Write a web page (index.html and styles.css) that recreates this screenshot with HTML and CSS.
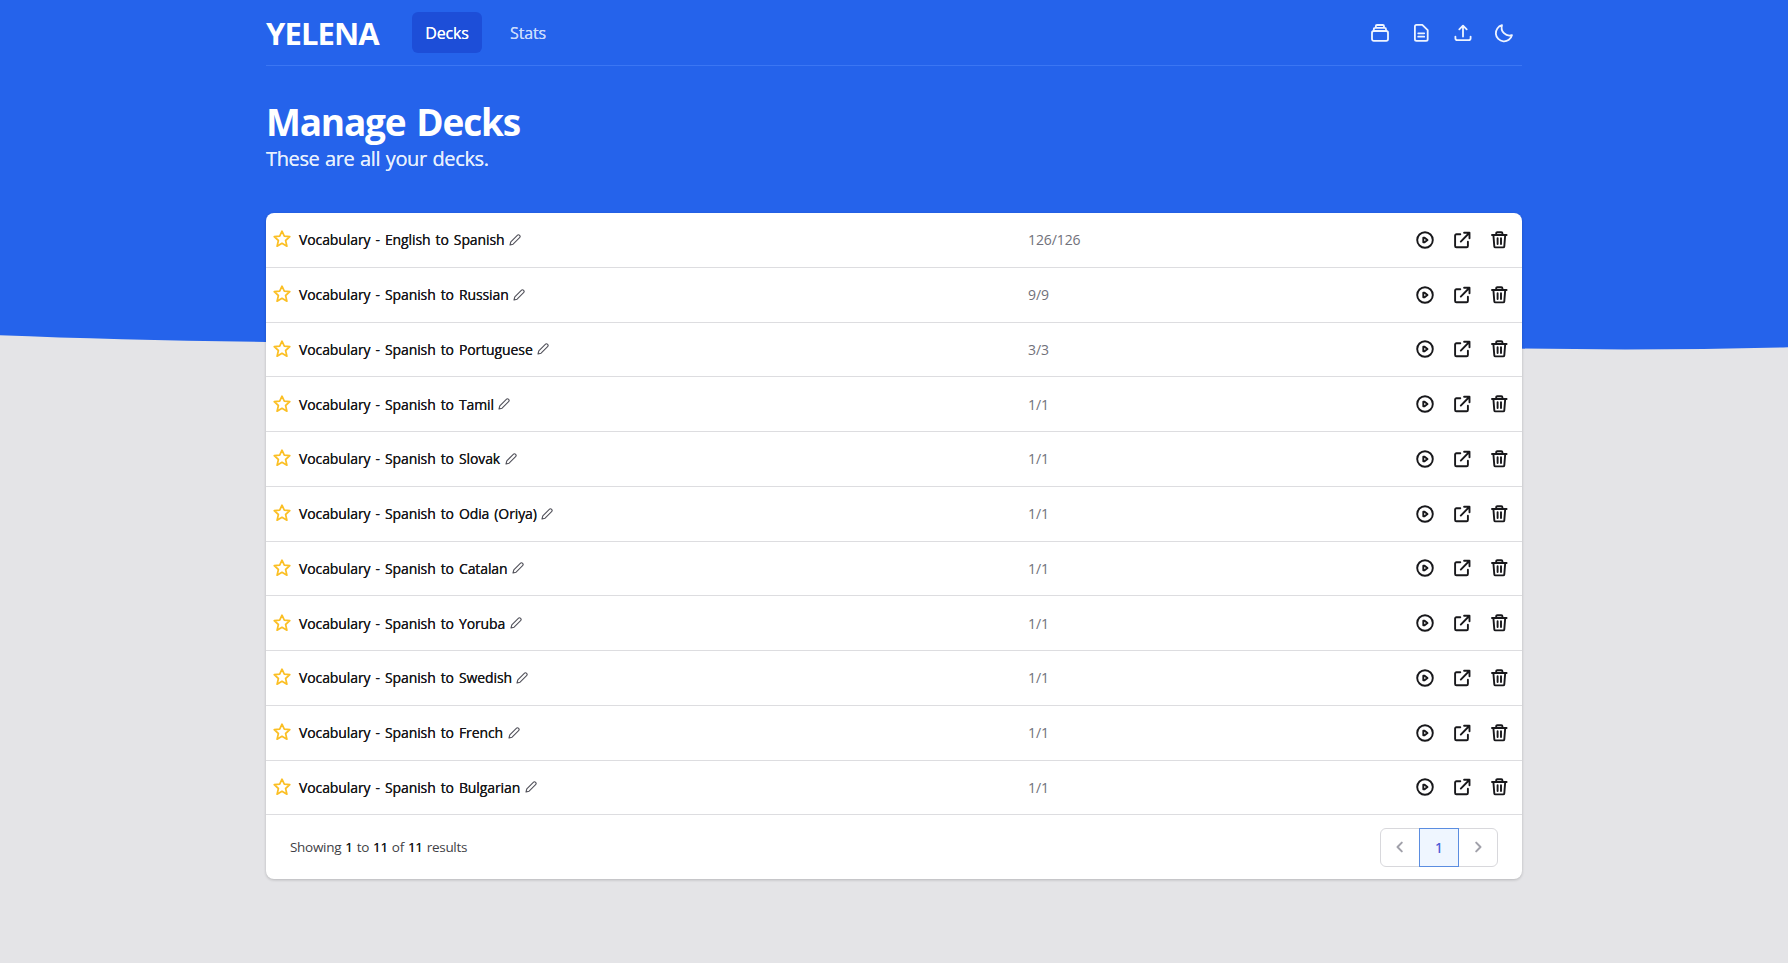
FILE: index.html
```html
<!DOCTYPE html>
<html lang="en">
<head>
<meta charset="utf-8">
<title>Yelena</title>
<link rel="stylesheet" href="styles.css">
</head>
<body>
<svg class="symbols" xmlns="http://www.w3.org/2000/svg">
  <symbol id="star" viewBox="0 0 18 18"><path d="M9 1.2l2.3 5 5.5.5-4.2 3.8 1.3 5.7L9 13.3l-4.9 2.9 1.3-5.7L1.2 6.7l5.5-.5z"/></symbol>
  <symbol id="pencil" viewBox="0 0 12 12"><path d="M1 11l.8-3.2L8.3 1.3a1.6 1.6 0 0 1 2.3 2.3L4.1 10.2z"/></symbol>
  <symbol id="play" viewBox="0 0 18 18"><circle cx="9" cy="9" r="7.8"/><path d="M7.3 6.7v4.6h1.3l2.9-2.3-2.9-2.3z"/></symbol>
  <symbol id="open" viewBox="0 0 18 18"><path d="M7.3 3.3H3.4a1.3 1.3 0 0 0-1.3 1.3V15a1.3 1.3 0 0 0 1.3 1.3h10.2a1.3 1.3 0 0 0 1.3-1.3v-4.2M7.8 10.6l8.4-8.6M11.1 1.8h5.4v5.4"/></symbol>
  <symbol id="trash" viewBox="0 0 18 18"><path d="M2 4h14.6M6.2 4V2.3A1.1 1.1 0 0 1 7.3 1.2h4a1.1 1.1 0 0 1 1.1 1.1V4M3.4 4l.9 11.3a1.2 1.2 0 0 0 1.2 1.1h7.6a1.2 1.2 0 0 0 1.2-1.1L15.2 4M7.6 7.2v5.8M11 7.2v5.8"/></symbol>
</svg>
<svg class="wave" viewBox="0 0 1788 350" preserveAspectRatio="none"><path d="M0 0H1788V347.2Q1650 351 1500 348.2C1180 340 600 346 266 342Q120 340 0 335.2Z"/></svg>
<div class="page">
  <header class="nav">
    <div class="brand">YELENA</div>
    <nav class="links"><a class="link active"><span>Decks</span></a><a class="link"><span>Stats</span></a></nav>
    <div class="tools">
      <svg viewBox="0 0 20 20"><rect x="2" y="8" width="16" height="9.8" rx="1.8"/><path d="M3.8 7.6V6.2q0-1.4 1.4-1.4h9.4q1.4 0 1.4 1.4v1.4M5.8 4.6V3.2q0-1.2 1.2-1.2h5.8q1.2 0 1.2 1.2v1.4"/></svg>
      <svg viewBox="0 0 20 20"><path d="M3.9 3.4A1.6 1.6 0 0 1 5.5 1.8h5.8l5.4 5.4v9a1.6 1.6 0 0 1-1.6 1.6H5.5a1.6 1.6 0 0 1-1.6-1.6zM7.2 10.3h6M7.2 13.7h6"/></svg>
      <svg viewBox="0 0 20 20"><path d="M10 13.5V2.8M6.3 6.3L10 2.6l3.7 3.7M2.4 13.6v1.7a1.9 1.9 0 0 0 1.9 1.9h11.4a1.9 1.9 0 0 0 1.9-1.9v-1.7"/></svg>
      <svg viewBox="0 0 20 20"><path d="M8 2.2a8.2 8.2 0 1 0 10 9.9A7.9 7.9 0 0 1 8 2.2z"/></svg>
    </div>
  </header>
  <div class="heading">
    <h1><span>Manage Decks</span></h1>
    <p><span>These are all your decks.</span></p>
  </div>
  <main class="card">
    <div class="row"><svg class="star"><use href="#star"/></svg><div class="name"><span>Vocabulary - English to Spanish</span><svg class="pencil"><use href="#pencil"/></svg></div><div class="count">126/126</div><div class="actions"><svg><use href="#play"/></svg><svg><use href="#open"/></svg><svg><use href="#trash"/></svg></div></div>
    <div class="row"><svg class="star"><use href="#star"/></svg><div class="name"><span>Vocabulary - Spanish to Russian</span><svg class="pencil"><use href="#pencil"/></svg></div><div class="count">9/9</div><div class="actions"><svg><use href="#play"/></svg><svg><use href="#open"/></svg><svg><use href="#trash"/></svg></div></div>
    <div class="row"><svg class="star"><use href="#star"/></svg><div class="name"><span>Vocabulary - Spanish to Portuguese</span><svg class="pencil"><use href="#pencil"/></svg></div><div class="count">3/3</div><div class="actions"><svg><use href="#play"/></svg><svg><use href="#open"/></svg><svg><use href="#trash"/></svg></div></div>
    <div class="row"><svg class="star"><use href="#star"/></svg><div class="name"><span>Vocabulary - Spanish to Tamil</span><svg class="pencil"><use href="#pencil"/></svg></div><div class="count">1/1</div><div class="actions"><svg><use href="#play"/></svg><svg><use href="#open"/></svg><svg><use href="#trash"/></svg></div></div>
    <div class="row"><svg class="star"><use href="#star"/></svg><div class="name"><span>Vocabulary - Spanish to Slovak</span><svg class="pencil"><use href="#pencil"/></svg></div><div class="count">1/1</div><div class="actions"><svg><use href="#play"/></svg><svg><use href="#open"/></svg><svg><use href="#trash"/></svg></div></div>
    <div class="row"><svg class="star"><use href="#star"/></svg><div class="name"><span>Vocabulary - Spanish to Odia (Oriya)</span><svg class="pencil"><use href="#pencil"/></svg></div><div class="count">1/1</div><div class="actions"><svg><use href="#play"/></svg><svg><use href="#open"/></svg><svg><use href="#trash"/></svg></div></div>
    <div class="row"><svg class="star"><use href="#star"/></svg><div class="name"><span>Vocabulary - Spanish to Catalan</span><svg class="pencil"><use href="#pencil"/></svg></div><div class="count">1/1</div><div class="actions"><svg><use href="#play"/></svg><svg><use href="#open"/></svg><svg><use href="#trash"/></svg></div></div>
    <div class="row"><svg class="star"><use href="#star"/></svg><div class="name"><span>Vocabulary - Spanish to Yoruba</span><svg class="pencil"><use href="#pencil"/></svg></div><div class="count">1/1</div><div class="actions"><svg><use href="#play"/></svg><svg><use href="#open"/></svg><svg><use href="#trash"/></svg></div></div>
    <div class="row"><svg class="star"><use href="#star"/></svg><div class="name"><span>Vocabulary - Spanish to Swedish</span><svg class="pencil"><use href="#pencil"/></svg></div><div class="count">1/1</div><div class="actions"><svg><use href="#play"/></svg><svg><use href="#open"/></svg><svg><use href="#trash"/></svg></div></div>
    <div class="row"><svg class="star"><use href="#star"/></svg><div class="name"><span>Vocabulary - Spanish to French</span><svg class="pencil"><use href="#pencil"/></svg></div><div class="count">1/1</div><div class="actions"><svg><use href="#play"/></svg><svg><use href="#open"/></svg><svg><use href="#trash"/></svg></div></div>
    <div class="row"><svg class="star"><use href="#star"/></svg><div class="name"><span>Vocabulary - Spanish to Bulgarian</span><svg class="pencil"><use href="#pencil"/></svg></div><div class="count">1/1</div><div class="actions"><svg><use href="#play"/></svg><svg><use href="#open"/></svg><svg><use href="#trash"/></svg></div></div>
    <footer class="foot">
      <p class="results">Showing <b>1</b> to <b>11</b> of <b>11</b> results</p>
      <div class="pager">
        <span class="step"><svg viewBox="0 0 12 12"><path d="M7.8 1.6L3.5 6l4.3 4.4"/></svg></span>
        <span class="current">1</span>
        <span class="step"><svg viewBox="0 0 12 12"><path d="M4.2 1.6L8.5 6l-4.3 4.4"/></svg></span>
      </div>
    </footer>
  </main>
</div>
</body>
</html>
```
FILE: styles.css
```css
* { box-sizing: border-box; }
body { margin: 0; min-height: 963px; background: #e4e4e7; font-family: "Open Sans", "Noto Sans", sans-serif; color: #18181b; overflow: hidden; }
h1, p { margin: 0; }
svg { fill: none; stroke: currentColor; stroke-linecap: round; stroke-linejoin: round; flex: none; }
.symbols { display: none; }
.wave { position: absolute; top: 0; left: 0; width: 100%; height: 350px; }
.wave path { fill: #2563eb; stroke: none; }
.page { position: relative; width: 1256px; margin: 0 auto; }

.nav { display: flex; align-items: center; height: 66px; border-bottom: 1px solid #3b76f3; color: #fff; }
.brand { width: 146px; font-size: 31px; font-weight: 700; letter-spacing: -0.9px; line-height: 40px; }
.links { display: flex; gap: 11px; }
.link { display: flex; align-items: center; justify-content: center; height: 41px; width: 70px; border-radius: 6px; font-size: 16px; font-weight: 500; letter-spacing: -0.15px; color: #cbdcfd; text-shadow: 0 0 .5px currentColor; }
.link.active { background: #1d4ed8; color: #fff; }
.tools { display: flex; gap: 21.3px; margin-left: auto; padding-right: 8px; color: #eef4ff; }
.tools svg { width: 20px; height: 20px; stroke-width: 1.8; }

.heading { height: 147px; padding-top: 32px; color: #fff; }
.heading h1 { font-size: 37px; font-weight: 700; line-height: 47px; letter-spacing: -1.2px; word-spacing: 2.5px; }
.heading p { font-size: 20px; line-height: 28px; letter-spacing: -0.37px; word-spacing: .8px; color: #e6effe; text-shadow: 0 0 .4px currentColor; }

.card { background: #fff; border-radius: 8px; box-shadow: 0 1px 3px rgba(0, 0, 0, .2); }
.row { display: grid; grid-template-columns: 18px 729px 1fr auto; align-items: center; height: 54.75px; padding: 0 14px 0 7px; border-bottom: 1px solid #dddde0; font-size: 14px; }
.star { width: 18px; height: 18px; margin-top: -1px; color: #fbbf24; stroke-width: 1.7; }
.name { display: flex; align-items: center; gap: 4.5px; padding-left: 8px; font-weight: 500; word-spacing: 1.5px; text-shadow: 0 0 .5px currentColor; }
.name span { letter-spacing: -0.1px; }
.pencil { width: 12px; height: 12px; color: #52525b; stroke-width: 1.1; }
.count { padding-left: 8px; color: #71717a; letter-spacing: -0.1px; }
.actions { display: flex; gap: 19px; }
.actions svg { width: 18px; height: 18px; stroke-width: 1.9; }

.foot { display: flex; align-items: center; justify-content: space-between; height: 64px; padding: 0 24px; }
.results { font-size: 13.5px; color: #3f3f46; letter-spacing: -0.3px; word-spacing: .8px; }
.results b { font-weight: 500; color: #18181b; text-shadow: 0 0 .5px currentColor; }
.pager { display: flex; height: 39px; width: 118px; border: 1px solid #d8d8dc; border-radius: 6px; }
.step { flex: 1; display: flex; align-items: center; justify-content: center; color: #a1a1aa; }
.step svg { width: 12px; height: 12px; stroke-width: 2; }
.current { width: 40px; margin: -1px 0; display: flex; align-items: center; justify-content: center; border: 1px solid #5b8de0; background: #eff6ff; color: #4f5fd8; font-size: 14px; font-weight: 500; text-shadow: 0 0 .5px currentColor; }
```
